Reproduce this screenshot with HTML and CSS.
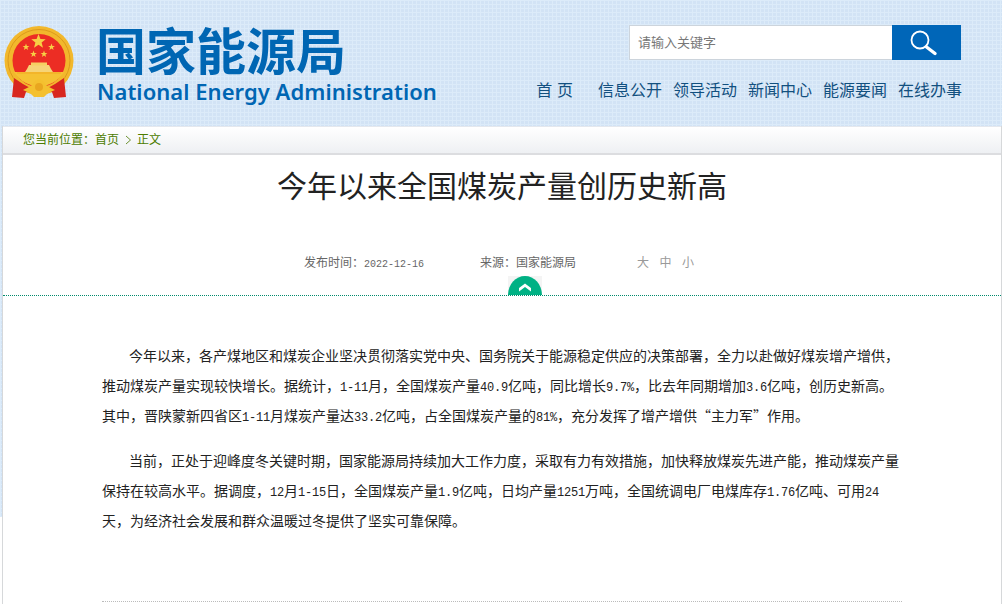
FILE: index.html
```html
<!DOCTYPE html>
<html lang="zh-CN">
<head>
<meta charset="utf-8">
<title>今年以来全国煤炭产量创历史新高</title>
<link rel="stylesheet" href="styles.css">
</head>
<body>
<header class="top">
  <svg class="emblem" width="78" height="104" viewBox="0 0 78 104" aria-hidden="true">
    <circle cx="40" cy="60.500" r="34.500" fill="#f2b82c"/>
    <circle cx="40" cy="60.500" r="31" fill="none" stroke="#dc9a1c" stroke-width="1"/>
    <circle cx="40" cy="60.500" r="26.500" fill="#ec2d24"/>
    <path d="M15 72 H65 Q56 86 40 86 Q24 86 15 72 Z" fill="#f5c233"/>
    <path d="M30 65 L50 65 L52 69 L54 72 L26 72 L28 69 Z" fill="#f6d477"/>
    <rect x="32" y="62.500" width="16" height="3" fill="#f6cf62"/>
    <path d="M18 72 H62 V74 H18 Z" fill="#f3b52a"/>
    <path d="M39.500 34 l1.900 5 5.300.3-4.100 3.300 1.400 5.100-4.500-2.900-4.500 2.900 1.400-5.100-4.100-3.300 5.300-.3z" fill="#f7cf45"/>
    <path d="M27 43.500 l.9 2.400 2.500.1-2 1.600.7 2.400-2.100-1.400-2.100 1.400.7-2.400-2-1.600 2.500-.1z" fill="#f7cf45"/>
    <path d="M52.500 43.500 l.9 2.400 2.500.1-2 1.600.7 2.400-2.100-1.400-2.100 1.400.7-2.400-2-1.600 2.500-.1z" fill="#f7cf45"/>
    <path d="M34.500 50.500 l.9 2.400 2.500.1-2 1.600.7 2.400-2.100-1.400-2.100 1.400.7-2.400-2-1.600 2.500-.1z" fill="#f7cf45"/>
    <path d="M45 50.500 l.9 2.400 2.500.1-2 1.600.7 2.400-2.100-1.400-2.100 1.400.7-2.400-2-1.600 2.500-.1z" fill="#f7cf45"/>
    <path d="M15 78 L24 84 L33 89 L27 92 L25 98 L13 97 Z M65 78 L56 84 L47 89 L53 92 L55 98 L67 97 Z" fill="#d8261f"/>
    <path d="M24 90 L32 86 L36 81 L40 79 L44 81 L48 86 L56 90 L49 93 L45 97 L35 97 L31 93 Z" fill="#f4c02f"/>
    <circle cx="40" cy="87" r="4" fill="#e9a61f"/>
  </svg>
  <div class="brand">
    <div class="brand-cn">国家能源局</div>
    <div class="brand-en">National Energy Administration</div>
  </div>
  <div class="top-right">
    <form class="search">
      <input class="search-input" type="text" placeholder="请输入关键字">
      <button class="search-btn" type="button" aria-label="搜索">
        <svg width="69" height="35" viewBox="0 0 69 35" aria-hidden="true">
          <circle cx="28" cy="15" r="8.500" fill="none" stroke="#fff" stroke-width="1.800"/>
          <path d="M34.500 22 L43 28.500" stroke="#fff" stroke-width="3.400" stroke-linecap="round"/>
          <path d="M33.500 21 L36 23" stroke="#fff" stroke-width="1.500"/>
        </svg>
      </button>
    </form>
    <nav class="nav">
      <a class="nav-home">首 页</a>
      <a>信息公开</a>
      <a>领导活动</a>
      <a>新闻中心</a>
      <a>能源要闻</a>
      <a>在线办事</a>
    </nav>
  </div>
</header>
<main class="main">
  <div class="crumb">您当前位置：首页<svg class="crumb-sep" width="18" height="10" viewBox="0 0 18 10" aria-hidden="true"><path d="M7 1 L11.500 5 L7 9" fill="none" stroke="#6d9232" stroke-width="1"/></svg>正文</div>
  <h1 class="title">今年以来全国煤炭产量创历史新高</h1>
  <div class="meta">
    <span class="meta-time">发布时间：<span class="meta-date">2022-12-16</span></span>
    <span class="meta-source">来源：国家能源局</span>
    <span class="meta-sizes"><a>大</a><a>中</a><a>小</a></span>
    <span class="badge">
      <svg width="34" height="19" viewBox="0 0 34 19" aria-hidden="true">
        <rect width="34" height="19" fill="#f4f4f4"/>
        <path d="M0 19 A17 19 0 0 1 34 19 Z" fill="#00b184"/>
        <path d="M11 15.500 L17 11 L23 15.500 V12 L17 7.500 L11 12 Z" fill="#fff"/>
      </svg>
    </span>
  </div>
  <article class="article">
    <p>今年以来，各产煤地区和煤炭企业坚决贯彻落实党中央、国务院关于能源稳定供应的决策部署，全力以赴做好煤炭增产增供，推动煤炭产量实现较快增长。据统计，<span class="n">1-11</span>月，全国煤炭产量<span class="n">40.9</span>亿吨，同比增长<span class="n">9.7%</span>，比去年同期增加<span class="n">3.6</span>亿吨，创历史新高。其中，晋陕蒙新四省区<span class="n">1-11</span>月煤炭产量达<span class="n">33.2</span>亿吨，占全国煤炭产量的<span class="n">81%</span>，充分发挥了增产增供“主力军”作用。</p>
    <p>当前，正处于迎峰度冬关键时期，国家能源局持续加大工作力度，采取有力有效措施，加快释放煤炭先进产能，推动煤炭产量保持在较高水平。据调度，<span class="n">12</span>月<span class="n">1-15</span>日，全国煤炭产量<span class="n">1.9</span>亿吨，日均产量<span class="n">1251</span>万吨，全国统调电厂电煤库存<span class="n">1.76</span>亿吨、可用<span class="n">24</span>天，为经济社会发展和群众温暖过冬提供了坚实可靠保障。</p>
  </article>
  <div class="rule"></div>
</main>
</body>
</html>
```
FILE: styles.css
```css
html, body { margin: 0; padding: 0; overflow: hidden; }
body {
  height: 604px;
  font-family: "Noto Sans CJK SC", sans-serif;
  background-color: #fff;
  background-image:
    linear-gradient(#fff, #fff),
    linear-gradient(#dcebf9 1px, transparent 1px),
    linear-gradient(90deg, #dcebf9 1px, transparent 1px),
    linear-gradient(#d2e3f5, #d2e3f5);
  background-size: 100% 87px, 4px 4px, 4px 4px, 100% 100%;
  background-position: 0 517px, 0 0, 0 0, 0 0;
  background-repeat: no-repeat, repeat, repeat, no-repeat;
}

.top { display: flex; height: 126px; box-sizing: border-box; padding-right: 40px; }
.emblem { display: block; flex: none; margin-right: 19px; margin-left: -1px; }
.brand { padding-top: 18px; }
.brand-cn {
  font-size: 50px; line-height: 60px; font-weight: 700;
  color: #0066b3; white-space: nowrap;
}
.brand-en {
  font-family: "Noto Sans", sans-serif;
  font-size: 22px; line-height: 22px; font-weight: 600; margin-top: 2px; padding-left: 1px;
  color: #0066b3; white-space: nowrap; letter-spacing: 0.040px;
}
.top-right { margin-left: auto; padding-top: 25px; display: flex; flex-direction: column; align-items: flex-end; }
.search { display: flex; height: 35px; width: 332px; margin-right: 1px; }
.search-input {
  flex: 1; min-width: 0; box-sizing: border-box; height: 35px;
  border: 1px solid #ccd4dc; border-right: 0; outline: 0;
  padding: 0 0 2px 8px; background: #fff;
  font: 13px "Noto Sans CJK SC", sans-serif; color: #777;
}
.search-input::placeholder { color: #777; opacity: 1; }
.search-btn { width: 69px; height: 35px; flex: none; border: 0; padding: 0; background: #0066b8; display: block; }
.search-btn svg { display: block; }
.nav { display: flex; gap: 11px; margin-top: 18px; font-size: 16px; line-height: 22px; color: #12507f; white-space: nowrap; }
.nav-home { margin-right: 14px; word-spacing: 1px; }

.main {
  margin-left: 2px; border-left: 1px solid #d6d8da; border-right: 1px solid #d6d8da;
  background: #fff; height: 478px; box-sizing: border-box;
}
.crumb {
  height: 29px; box-sizing: border-box; padding-left: 20px;
  border-top: 1px solid #e4e8ee; border-bottom: 2px solid #dcdde0;
  background: linear-gradient(#fff, #eef0f3);
  font-size: 12px; line-height: 23px; color: #4c7c00;
}
.crumb-sep { display: inline-block; vertical-align: -1px; }
.title {
  margin: 0; padding-top: 11px; text-align: center;
  font-size: 30px; line-height: 36px; font-weight: 400; color: #222;
}
.meta {
  position: relative; display: flex; margin-top: 50px; padding: 0 0 23px 301px;
  border-bottom: 1px dotted #008a6c;
  font-size: 12px; line-height: 20px; color: #666;
}
.meta-time { width: 176px; flex: none; }
.meta-date { font-family: "Liberation Mono", monospace; font-size: 10px; line-height: 1; }
.meta-source { width: 157px; flex: none; }
.meta-sizes { display: flex; gap: 10.500px; color: #999; }
.badge { position: absolute; left: 505px; bottom: 0; display: block; height: 19px; }
.badge svg { display: block; }
.article { margin: 44px 0 0 99px; width: 800px; font-size: 14px; line-height: 30px; color: #222; }
.article p { margin: 0 0 15px; text-indent: 27px; width: 798px; }
.n { font-family: "Liberation Mono", monospace; font-size: 12px; letter-spacing: -0.200px; line-height: 1; }
.rule { margin: 66px 0 0 99px; width: 800px; border-top: 1px dotted #bbb; }
```
